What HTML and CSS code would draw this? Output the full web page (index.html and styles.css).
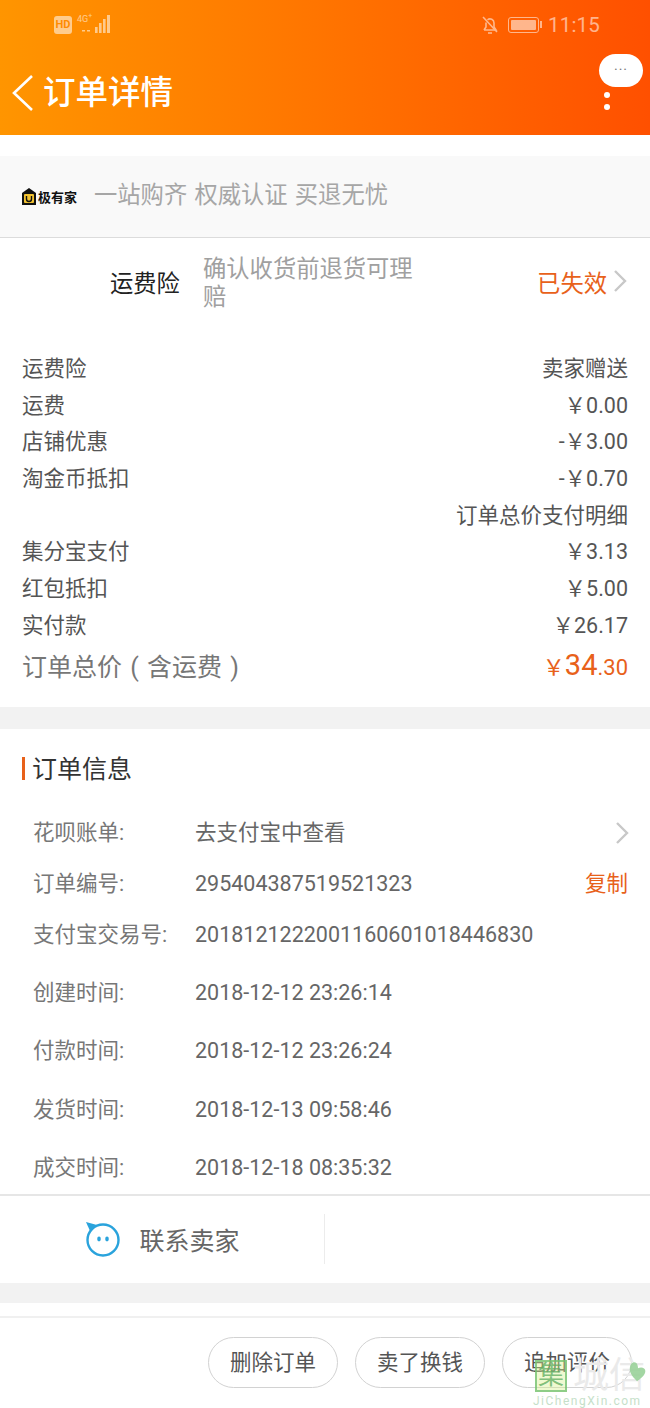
FILE: index.html
```html
<!DOCTYPE html>
<html lang="zh">
<head>
<meta charset="utf-8">
<title>订单详情</title>
<link rel="stylesheet" href="styles.css">
</head>
<body>
<div class="page">
  <header class="header">
    <div class="status">
      <div class="status-left">
        <span class="hd">HD</span>
        <span class="net">4G<sup>+</sup></span>
        <svg class="signal" width="30" height="20" viewBox="0 0 30 20"><g fill="#fff"><rect x="1" y="15" width="3" height="1.500"/><rect x="6" y="15" width="3" height="1.500"/><rect x="14" y="12" width="2.600" height="6"/><rect x="18" y="8" width="2.600" height="10"/><rect x="22" y="4" width="2.600" height="14"/><rect x="26" y="0" width="3" height="18"/></g></svg>
      </div>
      <div class="status-right">
        <svg class="bell" width="20" height="20" viewBox="0 0 20 20" fill="none" stroke="#fff" stroke-width="1.600"><path d="M4 15h12l-2-3V8a4 4 0 0 0-6.500-3.200M6 7.500V12l-2 3"/><path d="M8 18h4"/><path d="M3 2l14 15"/></svg>
        <span class="battery"><span class="battery-fill"></span></span>
        <span class="battery-tip"></span>
        <span class="time">11:15</span>
      </div>
    </div>
    <div class="nav">
      <svg class="back" width="24" height="38" viewBox="0 0 24 38" fill="none" stroke="#fff" stroke-width="2.600"><path d="M21 2L3 19l18 17"/></svg>
      <h1 class="title">订单详情</h1>
    </div>
    <div class="more">
      <span class="more-bubble">···</span>
      <i class="dot"></i>
      <i class="dot"></i>
    </div>
  </header>

  <section class="brand">
    <span class="brand-logo">
      <svg width="14" height="17" viewBox="0 0 14 17"><path d="M0 5L7 0l7 5v12H0z" fill="#111"/><rect x="2" y="6" width="10" height="9" rx="1" fill="#f2c230"/><path d="M4.500 8v3a2.500 2.500 0 0 0 5 0V8" fill="none" stroke="#111" stroke-width="1.400"/></svg>
      <b class="brand-name">极有家</b>
    </span>
    <span class="brand-slogan">一站购齐 权威认证 买退无忧</span>
  </section>

  <section class="insurance">
    <span class="ins-name">运费险</span>
    <span class="ins-desc">确认收货前退货可理赔</span>
    <span class="ins-state">已失效</span>
    <svg class="chev" width="14" height="22" viewBox="0 0 14 22" fill="none" stroke="#c8c8c8" stroke-width="2.400"><path d="M2 1l10 10-10 10"/></svg>
  </section>

  <section class="prices">
    <div class="price-row"><span>运费险</span><span>卖家赠送</span></div>
    <div class="price-row"><span>运费</span><span>￥0.00</span></div>
    <div class="price-row"><span>店铺优惠</span><span>-￥3.00</span></div>
    <div class="price-row"><span>淘金币抵扣</span><span>-￥0.70</span></div>
    <div class="price-row"><span></span><span>订单总价支付明细</span></div>
    <div class="price-row"><span>集分宝支付</span><span>￥3.13</span></div>
    <div class="price-row"><span>红包抵扣</span><span>￥5.00</span></div>
    <div class="price-row"><span>实付款</span><span>￥26.17</span></div>
    <div class="total-row">
      <span class="total-label">订单总价<span class="br">(</span>含运费<span class="br">)</span></span>
      <span class="total-value"><span class="cur">￥</span><span class="big">34</span><span class="dec">.30</span></span>
    </div>
  </section>

  <div class="gap gap-a"></div>

  <section class="info">
    <h2 class="info-title">订单信息</h2>
    <div class="info-row r-pay"><span class="k">花呗账单:</span><span class="v">去支付宝中查看</span>
      <svg class="chev" width="14" height="22" viewBox="0 0 14 22" fill="none" stroke="#c8c8c8" stroke-width="2.400"><path d="M2 1l10 10-10 10"/></svg></div>
    <div class="info-row r-no"><span class="k">订单编号:</span><span class="v">295404387519521323</span><span class="copy">复制</span></div>
    <div class="info-row r-ali"><span class="k">支付宝交易号:</span><span class="v">2018121222001160601018446830</span></div>
    <div class="info-row r-t"><span class="k">创建时间:</span><span class="v">2018-12-12 23:26:14</span></div>
    <div class="info-row r-t"><span class="k">付款时间:</span><span class="v">2018-12-12 23:26:24</span></div>
    <div class="info-row r-t"><span class="k">发货时间:</span><span class="v">2018-12-13 09:58:46</span></div>
    <div class="info-row r-t"><span class="k">成交时间:</span><span class="v">2018-12-18 08:35:32</span></div>
  </section>

  <section class="contact">
    <div class="contact-cell">
      <svg width="36" height="36" viewBox="0 0 36 36" fill="none"><circle cx="19" cy="19" r="15.500" stroke="#2aa3dc" stroke-width="2.400"/><path d="M2 1l11 3-7 6z" fill="#2aa3dc"/><ellipse cx="15" cy="18" rx="1.800" ry="2.400" fill="#2aa3dc"/><ellipse cx="23" cy="18" rx="1.800" ry="2.400" fill="#2aa3dc"/></svg>
      <span class="contact-text">联系卖家</span>
    </div>
    <div class="contact-cell contact-empty"></div>
  </section>

  <div class="gap gap-b"></div>

  <footer class="actions">
    <span class="btn">删除订单</span>
    <span class="btn">卖了换钱</span>
    <span class="btn">追加评价</span>
  </footer>

  <div class="watermark">
    <div class="wm-top">
      <span class="wm-mark">集</span>
      <span class="wm-text">城信</span>
      <svg class="wm-heart" width="20" height="22" viewBox="0 0 20 24"><path d="M4 2c4-2 6 2 6 6 3-2 8-1 8 3 0 5-6 9-9 11-3-3-8-8-8-13 0-3 1-6 3-7z" fill="#9ad29a"/></svg>
    </div>
    <div class="wm-url">JiChengXin.com</div>
  </div>
</div>
</body>
</html>
```
FILE: styles.css
```css
* { box-sizing: border-box; }
html, body { margin: 0; padding: 0; background: #fff; }
body { font-family: Roboto, "Noto Sans CJK SC", "Liberation Sans", sans-serif; }
.page { position: relative; width: 650px; height: 1408px; overflow: hidden; background: #fff; }

.header { position: relative; height: 135px; background: linear-gradient(90deg, #ff9500 0%, #ff7400 50%, #ff5000 100%); }
.status { height: 49px; display: flex; justify-content: space-between; align-items: center; padding: 0 50px 0 54px; }
.status-left { display: flex; align-items: center; gap: 4px; opacity: .55; }
.hd { width: 18px; height: 18px; background: #fff; color: #ff8a00; font-size: 11px; font-weight: 700; line-height: 18px; text-align: center; border-radius: 3px; }
.net { color: #fff; font-size: 9px; line-height: 1; align-self: flex-start; width: 0; margin-left: 1px; white-space: nowrap; }
.net sup { font-size: 7px; line-height: 0; }
.status-right { display: flex; align-items: center; opacity: .55; }
.bell { margin-right: 8px; }
.battery { width: 31px; height: 16px; border: 1px solid #fff; border-radius: 3px; padding: 2px; display: block; }
.battery-fill { display: block; height: 100%; background: #fff; border-radius: 1px; }
.battery-tip { width: 2px; height: 7px; background: #fff; margin: 0 6px 0 1px; }
.time { color: #fff; font-size: 20.500px; letter-spacing: .2px; }
.nav { display: flex; align-items: center; padding: 14px 0 0 11px; gap: 8px; }
.title { margin: 0; color: #fff; font-size: 32.500px; font-weight: 500; line-height: 60px; }
.more { position: absolute; top: 54px; right: 7px; width: 44px; display: flex; flex-direction: column; align-items: center; gap: 6px; }
.more-bubble { width: 44px; height: 33px; background: #fff; border-radius: 17px; color: #777; font-size: 14px; line-height: 33px; text-align: center; letter-spacing: 1px; }
.dot { width: 6px; height: 6px; border-radius: 50%; background: #fff; margin-right: 28px; }
.more-bubble + .dot { margin-top: -1px; }

.brand { height: 82px; margin-top: 21px; background: #f9f9f9; border-bottom: 1px solid #dcdcdc; display: flex; align-items: center; padding: 0 0 8px 22px; }
.brand-logo { display: flex; align-items: center; gap: 2px; width: 72px; margin-top: 8px; }
.brand-name { font-family: "Noto Sans CJK SC", sans-serif; font-size: 13px; color: #111; font-weight: 700; }
.brand-slogan { color: #a6a6a6; font-size: 23.300px; font-family: "Noto Sans CJK SC", sans-serif; word-spacing: 2px; }

.insurance { height: 90px; display: flex; align-items: flex-start; padding: 15px 23px 0 110px; }
.ins-name { font-size: 23.300px; color: #222; width: 93px; padding-top: 13px; line-height: 32px; font-family: "Noto Sans CJK SC", sans-serif; flex: none; }
.ins-desc { width: 216px; color: #a0a0a0; font-size: 23.300px; line-height: 28px; font-family: "Noto Sans CJK SC", sans-serif; }
.ins-state { margin-left: auto; color: #e8611a; font-size: 23.300px; line-height: 32px; padding-top: 13px; font-family: "Noto Sans CJK SC", sans-serif; }
.insurance .chev { margin: 17px 0 0 6px; }

.prices { padding: 23px 22px 0; }
.price-row { display: flex; justify-content: space-between; height: 36.700px; line-height: 36.700px; font-size: 21.500px; color: #555; }
.total-row { display: flex; justify-content: space-between; align-items: center; height: 44px; padding-bottom: 3px; }
.total-label { font-size: 25px; color: #777; }
.br { display: inline-block; width: 1em; text-align: center; }
.total-value { color: #e8611a; font-size: 22px; }
.cur { font-size: 22px; }
.big { font-size: 29px; }
.dec { font-size: 22px; }

.gap { background: #f2f2f2; }
.gap-a { height: 22px; margin-top: 18px; }
.gap-b { height: 20px; }

.info { height: 467px; border-bottom: 2px solid #e6e6e6; padding: 0 22px 0 33px; }
.info-title { position: relative; margin: 0 0 0 -1px; height: 82px; line-height: 82px; font-size: 25px; font-weight: 400; color: #333; }
.info-title::before { content: ""; position: absolute; left: -10px; top: 28px; width: 3px; height: 23px; background: #e8611a; }
.info-row { display: flex; align-items: center; height: 40px; font-size: 21.500px; line-height: 30px; color: #666; }
.r-pay { margin-top: 2px; }
.r-no { margin-top: 11px; }
.r-ali { margin-top: 11px; }
.r-t { margin-top: 18.400px; }
.k { width: 162px; color: #777; flex: none; }
.v { color: #666; }
.copy { margin-left: auto; color: #e8611a; }
.info-row .chev { margin-left: auto; margin-right: -1px; }

.contact { height: 87px; display: flex; align-items: center; }
.contact-cell { width: 326px; height: 50px; display: flex; align-items: center; justify-content: center; gap: 19px; border-right: 1px solid #ececec; }
.contact-empty { border-right: none; }
.contact-text { font-size: 25px; color: #666; }

.actions { height: 105px; margin-top: 13px; border-top: 2px solid #f0f0f0; display: flex; justify-content: flex-end; align-items: flex-start; gap: 17px; padding: 19px 18px 0 0; }
.btn { width: 130px; height: 51px; border: 1px solid #d2d2d2; border-radius: 26px; color: #555; font-size: 21.500px; line-height: 49px; text-align: center; }

.watermark { position: absolute; left: 533px; top: 1358px; width: 117px; pointer-events: none; }
.wm-top { display: flex; align-items: center; position: relative; height: 36px; }
.wm-mark { width: 32px; height: 32px; margin-left: 2px; background: rgba(214, 240, 140, .4); border: 2px solid rgba(110, 190, 110, .75); color: rgba(100, 175, 100, .8); font-size: 26px; line-height: 27px; text-align: center; }
.wm-text { color: #eaeaea; font-size: 36px; line-height: 36px; margin-left: 6px; white-space: nowrap; }
.wm-heart { position: absolute; right: 2px; top: 3px; opacity: .9; }
.wm-url { color: #c6dfc9; font-size: 12px; letter-spacing: 1.500px; line-height: 13px; margin-top: 1px; white-space: nowrap; }
```
